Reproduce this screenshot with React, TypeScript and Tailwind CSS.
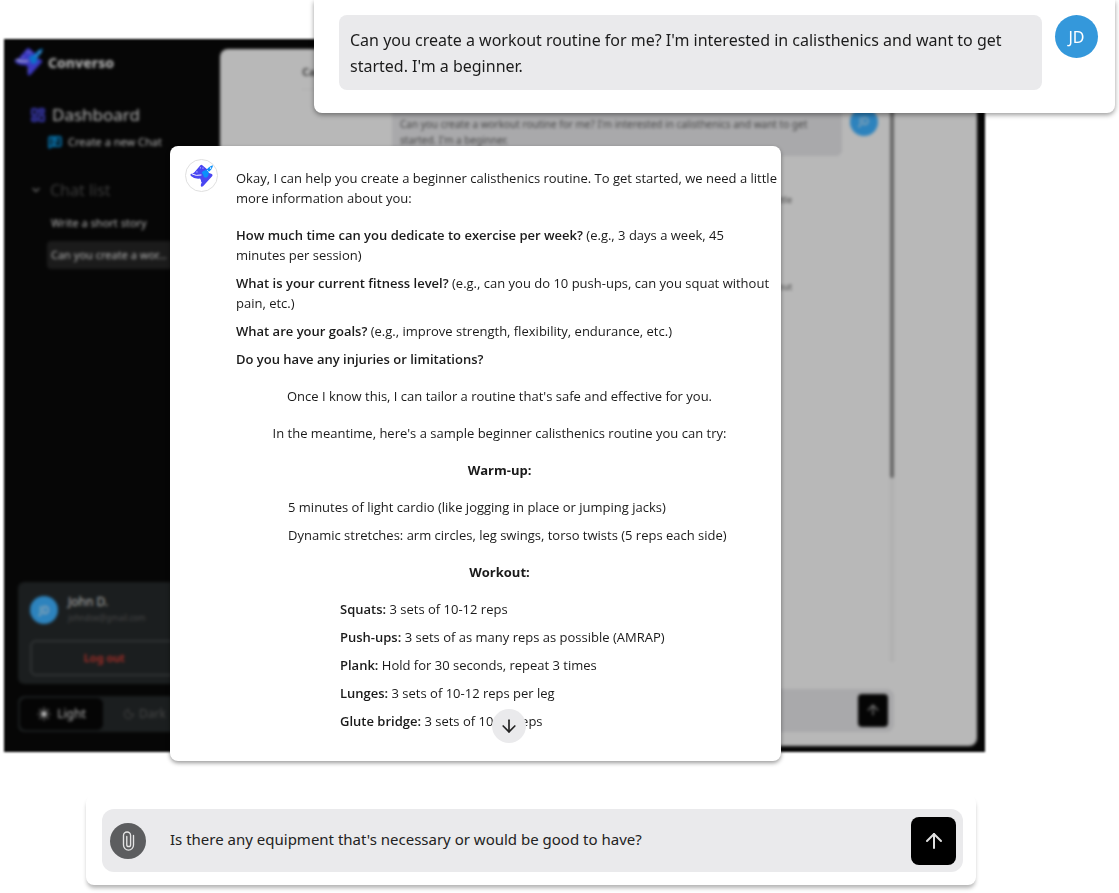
import { ArrowDown, ArrowUp, ChevronDown, LayoutDashboard, MessageSquareText, Moon, Sun } from "lucide-react";

const MESSAGE =
  "Can you create a workout routine for me? I'm interested in calisthenics and want to get started. I'm a beginner.";

const QUESTIONS = [
  { lead: "How much time can you dedicate to exercise per week?", rest: "(e.g., 3 days a week, 45 minutes per session)" },
  { lead: "What is your current fitness level?", rest: "(e.g., can you do 10 push-ups, can you squat without pain, etc.)" },
  { lead: "What are your goals?", rest: "(e.g., improve strength, flexibility, endurance, etc.)" },
  { lead: "Do you have any injuries or limitations?", rest: "" },
];

const EXERCISES = [
  { lead: "Squats:", rest: "3 sets of 10-12 reps" },
  { lead: "Push-ups:", rest: "3 sets of as many reps as possible (AMRAP)" },
  { lead: "Plank:", rest: "Hold for 30 seconds, repeat 3 times" },
  { lead: "Lunges:", rest: "3 sets of 10-12 reps per leg" },
  { lead: "Glute bridge:", rest: "3 sets of 10-12 reps" },
];

function Logo({ className }: { className: string }) {
  return (
    <svg viewBox="0 0 76 74" className={className} aria-hidden="true">
      <path d="M33 3 Q36 0 39 3 L54 16 L58 27 L69 31 Q73 33 70 38 L42 69 Q35 74 34 66 Q38 54 32 45 Q13 47 3 37 Q-1 31 5 30 Q8 30 14 25 Z" fill="#4a46f2" />
      <path d="M7 31 Q19 38 35 34" fill="none" stroke="#fff" strokeWidth="3" strokeLinecap="round" />
      <path d="M37 26 Q42 19 50 19 L60 9 Q66 4 73 3 Q72 10 68 16 L59 25 Q61 35 54 41 Q49 43 44 40 Q42 32 37 26 Z" fill="#0a90fb" />
      <path d="M55 19 L60 24" stroke="#fff" strokeWidth="2" strokeLinecap="round" />
      <circle cx="65" cy="12" r="2.500" fill="#fff" />
      <circle cx="33" cy="11" r="2" fill="#c9c9ff" />
      <circle cx="22" cy="24" r="2" fill="#c9c9ff" />
      <circle cx="41" cy="12" r="2" fill="#c9c9ff" />
      <circle cx="36" cy="58" r="2" fill="#c9c9ff" />
    </svg>
  );
}

function Sidebar() {
  return (
    <aside className="flex w-[216px] shrink-0 flex-col px-[14px] pt-2 pb-5 text-[#b5b5b5] blur-[1px]">
      <div className="-ml-1 flex items-center gap-1">
        <Logo className="h-[30px] w-[30px] opacity-80" />
        <span className="text-[14px] font-extrabold">Converso</span>
      </div>
      <a href="#dashboard" className="mt-6 ml-3 flex items-center gap-1.5 text-[17px] leading-7">
        <LayoutDashboard className="h-4 w-4 text-[#3939ae]" strokeWidth={3} />
        Dashboard
      </a>
      <a href="#new" className="mt-[3px] ml-[30px] flex items-center gap-1.5 text-[11px] leading-5">
        <MessageSquareText className="h-3.5 w-3.5 text-[#087bb8]" strokeWidth={3} />
        Create a new Chat
      </a>
      <button type="button" className="mt-6 ml-3 flex items-center gap-2 text-[16px] leading-7 text-[#3d3d3d]">
        <ChevronDown className="h-3 w-3 text-[#666666]" strokeWidth={3} />
        Chat list
      </button>
      <nav className="mt-[5px] ml-[29px] text-[11px] leading-7">
        <a href="#story" className="block px-1">Write a short story</a>
        <a href="#workout" className="mt-1 block truncate rounded bg-[#1b1b1b] px-1">Can you create a wor...</a>
      </nav>
      <div className="mt-auto rounded-md bg-[#1b1e1f] px-3 pt-3 pb-2">
        <div className="flex items-center gap-2.5">
          <span className="grid h-7 w-7 place-items-center rounded-full bg-[#2d83bd] text-[10px] text-[#b5b5b5]">JD</span>
          <div className="text-[12px] leading-4">
            <p>John D.</p>
            <p className="text-[8px] text-[#484848]">johndoe@gmail.com</p>
          </div>
        </div>
        <button type="button" className="mt-3.5 h-9 w-full rounded-md border-2 border-[#303334] pr-4 text-[11px] font-semibold text-[#a92e27]">
          Log out
        </button>
      </div>
      <div className="mt-3 flex h-9 rounded-md bg-[#1b1e1f] p-0.5 text-[12px]">
        <button type="button" className="flex w-[83px] items-center justify-center gap-1.5 rounded-md bg-[#050505]">
          <Sun className="h-3.5 w-3.5" fill="currentColor" /> Light
        </button>
        <button type="button" className="flex flex-1 items-center gap-1 pl-5 text-[#484848]">
          <Moon className="h-3 w-3" /> Dark
        </button>
      </div>
    </aside>
  );
}

function ChatWindow() {
  return (
    <section className="mr-[130px] flex h-[713px] bg-[#060606] pr-2 blur-[1px]">
      <Sidebar />
      <div className="mt-[10px] mb-[6px] flex min-w-0 flex-1 flex-col rounded-lg bg-[#b8b8b8] pr-[83px] text-[#444444] blur-[1px]">
        <h2 className="ml-[82px] border-b border-[#afafaf] pt-[15px] pb-2 text-[11px] font-bold">Can you create a workout routine for me?</h2>
        <div className="flex h-[572px] justify-end">
          <div className="min-w-0 flex-1 pt-[18px] pl-[172px]">
            <div className="flex gap-2">
              <p className="flex-1 rounded-md bg-[#a9a9ab] px-2 py-2 text-[10px] leading-4">{MESSAGE}</p>
              <span className="mr-3 grid h-7 w-7 place-items-center rounded-full bg-[#2d83bd] text-[10px] text-[#b5b5b5]">JD</span>
            </div>
            <div className="mr-[98px] text-right text-[9px] leading-4">
              <p className="pt-9">To get started, we need a little</p>
              <p className="pt-[71px]">can you squat without</p>
            </div>
          </div>
          <div className="flex w-1 flex-col items-center bg-[#b0b0b0]">
            <span className="h-[388px] w-full rounded bg-[#666666]" />
          </div>
        </div>
        <div className="mt-[27px] ml-[82px] flex h-[43px] items-center justify-end rounded-lg bg-[#a9a9ab] pr-1.5">
          <button type="button" aria-label="Send draft" className="grid h-[33px] w-[30px] place-items-center rounded bg-[#050505] text-[#808080]">
            <ArrowUp className="h-4 w-4" />
          </button>
        </div>
      </div>
    </section>
  );
}

function PromptCard() {
  return (
    <section className="absolute top-0 right-1 left-[314px] flex h-[113px] items-start gap-[13px] rounded-b-lg bg-white pt-[15px] pr-[17px] pl-[25px] shadow-[0_2px_5px_rgba(0,0,0,0.4)]">
      <p className="flex-1 rounded-lg bg-[#eaeaec] px-[11px] pt-3 pb-[11px] text-[16px] leading-[26px] text-[#1c1c1c]">{MESSAGE}</p>
      <span className="grid h-[43px] w-[43px] place-items-center rounded-full bg-[#3498db] text-[16px] text-white">JD</span>
    </section>
  );
}

function AnswerCard() {
  return (
    <article className="absolute top-[146px] right-[338px] left-[170px] flex h-[615px] gap-[18px] rounded-lg bg-white pt-3 pr-[18px] pl-[15px] font-['Open_Sans','Noto_Sans',sans-serif] text-[13px] leading-5 text-[#1a1a1a] shadow-[0_2px_4px_rgba(0,0,0,0.4)]">
      <span className="mt-px grid h-[33px] w-[33px] shrink-0 place-items-center rounded-full border border-[#e0e0e0]">
        <Logo className="h-6 w-6" />
      </span>
      <div className="flex min-w-0 flex-1 flex-col gap-[17px] pt-2.5">
        <p className="-mr-4">Okay, I can help you create a beginner calisthenics routine. To get started, we need a little more information about you:</p>
        <ul className="-mr-2 flex flex-col gap-2">
          {QUESTIONS.map((q) => (
            <li key={q.lead}>
              <strong className="font-semibold">{q.lead}</strong> {q.rest}
            </li>
          ))}
        </ul>
        <p className="text-center">Once I know this, I can tailor a routine that's safe and effective for you.</p>
        <p className="text-center">In the meantime, here's a sample beginner calisthenics routine you can try:</p>
        <h3 className="text-center font-bold">Warm-up:</h3>
        <ul className="ml-[52px] flex flex-col gap-2">
          <li>5 minutes of light cardio (like jogging in place or jumping jacks)</li>
          <li>Dynamic stretches: arm circles, leg swings, torso twists (5 reps each side)</li>
        </ul>
        <h3 className="text-center font-bold">Workout:</h3>
        <ul className="ml-[104px] flex flex-col gap-2">
          {EXERCISES.map((e) => (
            <li key={e.lead}>
              <strong className="font-semibold">{e.lead}</strong> {e.rest}
            </li>
          ))}
        </ul>
      </div>
      <button
        type="button"
        aria-label="Scroll to latest"
        className="absolute bottom-[18px] left-[322px] grid h-[34px] w-[34px] place-items-center rounded-full bg-[#eaeaec] text-[#222222]"
      >
        <ArrowDown className="h-5 w-5" />
      </button>
    </article>
  );
}

function Composer() {
  return (
    <form className="mt-[43px] mr-[139px] ml-[82px] rounded-lg bg-white pt-[14px] pr-[13px] pb-[13px] pl-4 shadow-[0_4px_4px_-1px_rgba(0,0,0,0.3)]">
      <div className="flex h-[63px] items-center rounded-xl bg-[#eaeaec] pr-[7px] pl-2">
        <button type="button" aria-label="Attach a file" className="grid h-9 w-9 place-items-center rounded-full bg-[#5c5d5f] text-[#e4e4e4]">
          <svg viewBox="0 0 14 22" className="h-5 w-[13px]" fill="none" stroke="currentColor" strokeWidth="1.5" strokeLinecap="round" aria-hidden="true">
            <path d="M12.500 5v10.500a5.500 5.500 0 0 1-11 0V5a3.800 3.800 0 0 1 7.800 0v10a2 2 0 0 1-4.200 0V6" />
          </svg>
        </button>
        <input
          type="text"
          aria-label="Message"
          defaultValue="Is there any equipment that's necessary or would be good to have?"
          className="mb-1 ml-6 min-w-0 flex-1 bg-transparent text-[15px] leading-6 text-[#222222] outline-none"
        />
        <button type="button" aria-label="Send" className="grid h-12 w-[45px] place-items-center rounded-lg bg-black text-[#e0e0e0]">
          <ArrowUp className="h-6 w-6" strokeWidth={2} />
        </button>
      </div>
    </form>
  );
}

export default function App() {
  return (
    <main className="relative min-h-screen bg-white px-1 pt-[39px] pb-2 font-['Noto_Sans','Open_Sans',sans-serif]">
      <ChatWindow />
      <PromptCard />
      <AnswerCard />
      <Composer />
    </main>
  );
}
